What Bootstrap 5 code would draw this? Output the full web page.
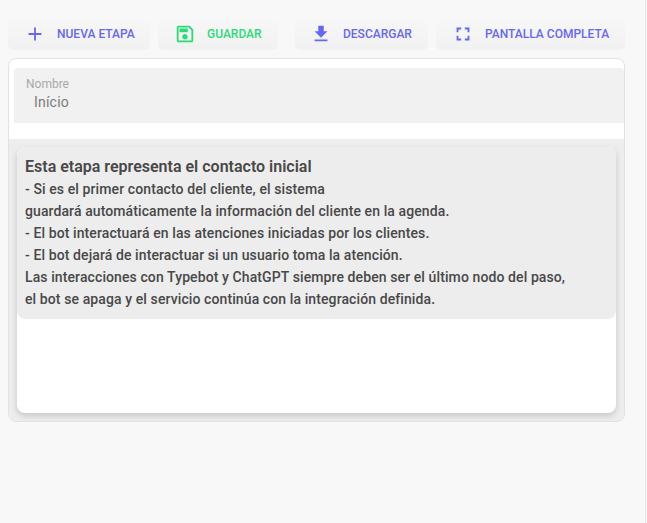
<!DOCTYPE html>
<html lang="es">
<head>
<meta charset="utf-8">
<title>Etapa</title>
<link href="https://cdn.jsdelivr.net/npm/bootstrap@5.3.0/dist/css/bootstrap.min.css" rel="stylesheet">
<style>
html,body{height:100%;overflow:hidden}
body{background:#f8f8f8;font-family:Roboto,"Liberation Sans",sans-serif;width:645px;border-right:1px solid #e4e4e4;box-sizing:content-box;height:523px}
.shell{width:617px;margin-left:8px;padding-top:20px}
.tool-row{height:30px;margin-bottom:8px;gap:8px}
.tool-btn{height:30px;border:0;border-radius:6px;background:linear-gradient(#f7f7f7,#f1f1f1);color:#6667f5;font-size:12px;font-weight:500;letter-spacing:0;padding:0 0 2px 0;display:flex;align-items:center;justify-content:flex-start;white-space:nowrap;text-transform:uppercase}
.tool-btn svg{display:block;flex:none}
.tb-new{width:142px;padding-left:16px}.tb-new svg{margin-right:11px}
.tb-save{width:120px;padding-left:16px;color:#28dc78}.tb-save svg{margin-right:11px}
.tb-down{width:133px;padding-left:15px;margin-left:9px}.tb-down svg{margin-right:11px}
.tb-full{width:189px;padding-left:16px}.tb-full svg{margin-right:11px}
.stage{height:364px;border:1px solid #e2e2e2;border-radius:8px;background:#fff;overflow:hidden}
.name-field{margin:9px 0 0 5px;height:55px;background:#f1f1f1;border-radius:4px 4px 0 0;padding:9px 0 0 12px}
.name-label{font-size:12px;line-height:14px;color:#a8a8a8}
.name-value{font-size:14px;line-height:20px;color:#7b7b7b;margin-left:8px;margin-top:1px;letter-spacing:.2px}
.canvas-area{margin-top:16px;height:282px;background:#ededed;padding:8px 8px 0 8px}
.node-card{height:266px;background:#fff;border-radius:8px;box-shadow:0 3px 6px rgba(0,0,0,.16)}
.node-text{background:#ededed;border-radius:8px;height:172px;padding:9px 8px;color:#484848;font-size:14px;font-weight:500;line-height:22px;letter-spacing:.1px}
.node-title{font-size:16px;font-weight:600;line-height:22px;display:block;letter-spacing:0}
</style>
</head>
<body>
<div class="shell">
  <div class="d-flex tool-row">
    <button class="tool-btn tb-new" type="button"><svg width="22" height="22" viewBox="0 0 24 24" fill="#6667f5"><path d="M19 13h-6v6h-2v-6H5v-2h6V5h2v6h6z"/></svg><span>Nueva etapa</span></button>
    <button class="tool-btn tb-save" type="button"><svg width="22" height="22" viewBox="0 0 24 24" fill="#28dc78"><path d="M17 3H5c-1.1 0-2 .9-2 2v14c0 1.1.9 2 2 2h14c1.1 0 2-.9 2-2V7l-4-4zm2 16H5V5h11.2L19 7.8V19zm-7-7c-1.66 0-3 1.34-3 3s1.34 3 3 3 3-1.34 3-3-1.34-3-3-3zM6 6h9v4H6z"/></svg><span>Guardar</span></button>
    <button class="tool-btn tb-down" type="button"><svg width="22" height="22" viewBox="0 0 24 24" fill="#6667f5"><path d="M19 9h-4V3H9v6H5l7 7 7-7zM5 18v2h14v-2H5z"/></svg><span>Descargar</span></button>
    <button class="tool-btn tb-full" type="button"><svg width="22" height="22" viewBox="0 0 24 24" fill="#6667f5"><path d="M7 14H5v5h5v-2H7v-3zm-2-4h2V7h3V5H5v5zm12 7h-3v2h5v-5h-2v3zM14 5v2h3v3h2V5h-5z"/></svg><span>Pantalla completa</span></button>
  </div>
  <div class="stage">
    <div class="name-field">
      <div class="name-label">Nombre</div>
      <div class="name-value">Início</div>
    </div>
    <div class="canvas-area">
      <div class="node-card">
        <div class="node-text">
          <span class="node-title">Esta etapa representa el contacto inicial</span>
          - Si es el primer contacto del cliente, el sistema<br>
          guardará automáticamente la información del cliente en la agenda.<br>
          - El bot interactuará en las atenciones iniciadas por los clientes.<br>
          - El bot dejará de interactuar si un usuario toma la atención.<br>
          Las interacciones con Typebot y ChatGPT siempre deben ser el último nodo del paso,<br>
          el bot se apaga y el servicio continúa con la integración definida.
        </div>
      </div>
    </div>
  </div>
</div>
<script src="https://cdn.jsdelivr.net/npm/bootstrap@5.3.0/dist/js/bootstrap.bundle.min.js"></script>
</body>
</html>
